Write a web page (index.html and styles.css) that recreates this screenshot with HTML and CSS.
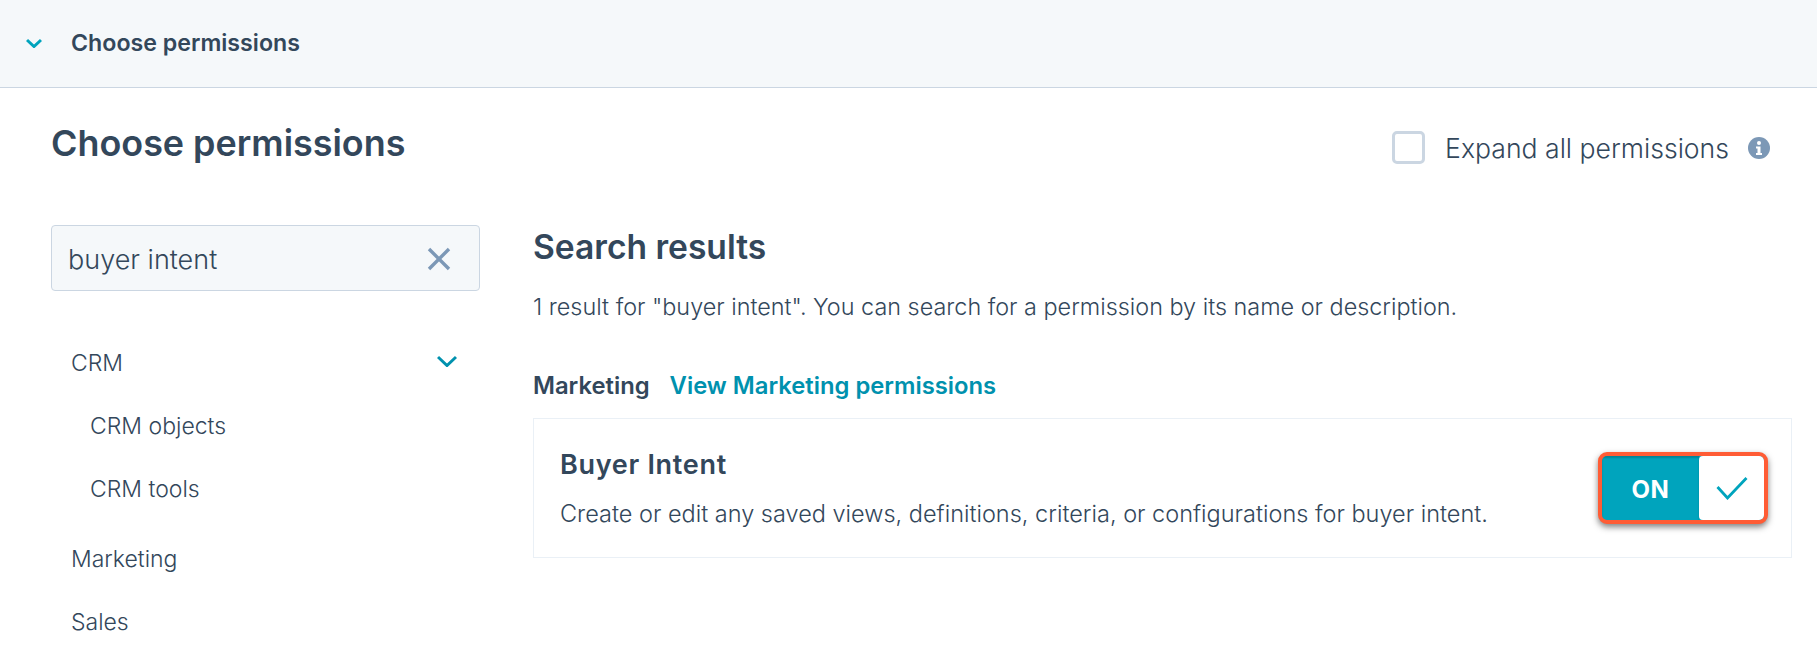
FILE: index.html
```html
<!DOCTYPE html>
<html lang="en">
<head>
<meta charset="utf-8">
<title>Choose permissions</title>
<link rel="stylesheet" href="styles.css">
</head>
<body>
<header class="bar">
  <svg class="bar-chevron" viewBox="0 0 16 10" width="16" height="10"><path d="M1 2l7 6.500L15 2" fill="none" stroke="#00a4bd" stroke-width="3"/></svg>
  <span class="bar-title">Choose permissions</span>
</header>
<main class="panel">
  <div class="top">
    <h1 class="title">Choose permissions</h1>
    <div class="expand">
      <span class="checkbox"></span>
      <span class="expand-label">Expand all permissions</span>
      <svg class="info" viewBox="0 0 22 22" width="22" height="22"><circle cx="11" cy="11" r="11" fill="#7c98b6"/><circle cx="11" cy="6" r="2" fill="#fff"/><path d="M8 9.5h4.500v6.500h1.500v2H8v-2h1.500v-4.500H8z" fill="#fff"/></svg>
    </div>
  </div>
  <div class="columns">
    <aside class="side">
      <div class="search">
        <span class="search-text">buyer intent</span>
        <svg viewBox="0 0 24 24" width="24" height="24"><path d="M2 2l20 20M22 2L2 22" stroke="#7c98b6" stroke-width="3.400" fill="none"/></svg>
      </div>
      <nav class="nav">
        <div class="nav-item nav-head">CRM
          <svg class="nav-chevron" viewBox="0 0 20 12" width="20" height="12"><path d="M1 2l9 8.500L19 2" fill="none" stroke="#0091ae" stroke-width="3"/></svg>
        </div>
        <div class="nav-item nav-sub">CRM objects</div>
        <div class="nav-item nav-sub">CRM tools</div>
        <div class="nav-item nav-gap">Marketing</div>
        <div class="nav-item">Sales</div>
      </nav>
    </aside>
    <section class="results">
      <h2 class="results-title">Search results</h2>
      <p class="results-note">1 result for "buyer intent". You can search for a permission by its name or description.</p>
      <div class="group">
        <span class="group-name">Marketing</span>
        <a class="group-link">View Marketing permissions</a>
      </div>
      <div class="card">
        <div class="card-body">
          <div class="card-title">Buyer Intent</div>
          <div class="card-desc">Create or edit any saved views, definitions, criteria, or configurations for buyer intent.</div>
        </div>
        <div class="toggle">
          <span class="toggle-on">ON</span>
          <span class="toggle-knob"><svg viewBox="0 0 32 24" width="32" height="24"><path d="M1.500 11l10 11 19-20" fill="none" stroke="#00a4bd" stroke-width="2.800"/></svg></span>
        </div>
      </div>
    </section>
  </div>
</main>
</body>
</html>
```
FILE: styles.css
```css
* { box-sizing: border-box; }
html, body { margin: 0; height: 100%; }
body {
  background: #fff;
  color: #33475b;
  font-family: "Inter", "Liberation Sans", sans-serif;
  overflow: hidden;
}
.bar {
  height: 88px;
  background: #f5f8fa;
  border-bottom: 1px solid #cbd6e2;
  display: flex;
  align-items: center;
  padding: 0 0 2px 26px;
}
.bar-chevron { margin-right: 29px; }
.bar-title { font-size: 23.200px; font-weight: 600; }
.panel { padding: 0 25px 0 51px; }
.top {
  display: flex;
  justify-content: space-between;
  align-items: flex-start;
  height: 137px;
}
.title {
  margin: 30px 0 0;
  font-size: 35.900px;
  line-height: 50px;
  font-weight: 600;
}
.expand {
  display: flex;
  align-items: center;
  margin: 43px 22px 0 0;
  height: 33px;
}
.checkbox {
  width: 33px;
  height: 33px;
  border: 3px solid #cbd6e2;
  border-radius: 5px;
  margin-right: 20px;
}
.expand-label { font-size: 26.600px; margin-right: 19px; font-weight: 300; }
.columns { display: flex; }
.side { width: 429px; margin-right: 53px; flex: none; }
.search {
  height: 66px;
  background: #f5f8fa;
  border: 1px solid #cbd6e2;
  border-radius: 4px;
  display: flex;
  align-items: center;
  justify-content: space-between;
  padding: 2px 28px 0 16px;
}
.search-text { font-size: 27px; font-weight: 300; }
.nav { margin-top: 41px; }
.nav-item {
  font-size: 23px;
  line-height: 63px;
  padding-left: 20px;
  display: flex;
  align-items: center;
  justify-content: space-between;
  padding-right: 23px;
  font-weight: 300;
}
.nav-chevron { margin-bottom: 5px; }
.nav-sub { padding-left: 39px; }
.nav-gap { margin-top: 7px; }
.results { flex: 1; }
.results-title {
  margin: 0;
  font-size: 33.600px;
  font-weight: 600;
  line-height: 44px;
}
.results-note { margin: 22px 0 0; font-size: 23.400px; line-height: 32px; font-weight: 300; }
.group { margin-top: 47px; display: flex; gap: 20px; font-size: 23.800px; line-height: 32px; font-weight: 600; }
.group-link { color: #0091ae; }
.card {
  margin-top: 16px;
  height: 140px;
  border: 1px solid #eaf0f6;
  display: flex;
  align-items: center;
  justify-content: space-between;
  padding: 0 23px 0 26px;
}
.card-body { padding-top: 2px; }
.card-title { font-size: 27px; font-weight: 600; line-height: 32px; letter-spacing: .7px; }
.card-desc { font-size: 23.500px; line-height: 32px; margin-top: 17px; font-weight: 300; }
.toggle {
  width: 170px;
  height: 72px;
  border: 4px solid #ff5c35;
  border-radius: 9px;
  display: flex;
  overflow: hidden;
  box-shadow: 0 3px 6px rgba(0,0,0,.5);
  background: #00a4bd;
}
.toggle-on {
  width: 97px;
  color: #fff;
  font-weight: 700;
  font-size: 24px;
  letter-spacing: .5px;
  padding-top: 2px;
  display: flex;
  align-items: center;
  justify-content: center;
  box-shadow: inset 0 2px 2px rgba(0,0,0,.2);
}
.toggle-knob {
  flex: 1;
  background: #fff;
  border-radius: 4px;
  display: flex;
  align-items: center;
  justify-content: center;
}
```
